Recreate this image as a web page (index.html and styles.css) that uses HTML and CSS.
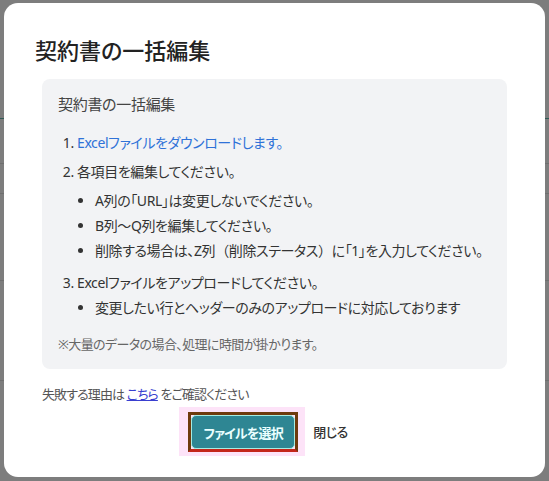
FILE: index.html
```html
<!DOCTYPE html>
<html lang="ja">
<head>
<meta charset="utf-8">
<link rel="stylesheet" href="styles.css">
</head>
<body>
<div class="backdrop">
  <div class="dialog">
    <h1 class="title">契約書の一括編集</h1>
    <div class="panel">
      <p class="panel-head">契約書の一括編集</p>
      <ol class="steps">
        <li><a class="dl-link" href="#">Excelファイルをダウンロードします。</a></li>
        <li>各項目を編集してください。
          <ul class="subs">
            <li>A列の「URL」は変更しないでください。</li>
            <li>B列～Q列を編集してください。</li>
            <li>削除する場合は、Z列<span class="wide">（</span>削除ステータス<span class="wide">）</span>に「1」を入力してください。</li>
          </ul>
        </li>
        <li>Excelファイルをアップロードしてください。
          <ul class="subs subs-last">
            <li>変更したい行とヘッダーのみのアップロードに対応しております</li>
          </ul>
        </li>
      </ol>
      <p class="note">※大量のデータの場合、処理に時間が掛かります。</p>
    </div>
    <p class="reason">失敗する理由は <a class="reason-link" href="#">こちら</a> をご確認ください</p>
    <div class="actions">
      <div class="focus-glow">
        <div class="focus-ring"><button class="primary">ファイルを選択</button></div>
      </div>
      <button class="close">閉じる</button>
    </div>
  </div>
</div>
</body>
</html>
```

FILE: styles.css
```css
* { box-sizing: border-box; }
html, body { margin: 0; padding: 0; }
body {
  width: 549px;
  height: 481px;
  overflow: hidden;
  font-family: "Noto Sans", "Noto Sans CJK JP", sans-serif;
  font-feature-settings: "palt";
  background-color: #7d7d7d;
  background-image:
    linear-gradient(#6f6f6f, #6f6f6f),
    linear-gradient(#6f6f6f, #6f6f6f),
    linear-gradient(#6f6f6f, #6f6f6f),
    linear-gradient(#6f6f6f, #6f6f6f),
    linear-gradient(#2f5a55, #2f5a55);
  background-size: 549px 1px, 549px 1px, 549px 1px, 549px 1px, 549px 1px;
  background-position: 0 163px, 0 193px, 0 280px, 0 380px, 0 118px;
  background-repeat: no-repeat;
}
.backdrop {
  padding: 3px 4px 4px 4px;
}
.dialog {
  width: 541px;
  height: 474px;
  background: #ffffff;
  border-radius: 14px;
  padding: 32px 38px 0 38px;
  color: #333;
}
.title {
  margin: 0 0 0 -7px;
  font-size: 22px;
  font-weight: 500;
  line-height: 30px;
  color: #222;
}
.panel {
  margin-top: 14px;
  background: #f2f3f5;
  border-radius: 8px;
  padding: 13px 16px 15px 16px;
}
.panel-head {
  margin: 0;
  font-size: 15px;
  line-height: 24px;
  letter-spacing: -0.3px;
  color: #444;
}
.steps {
  margin: 15px 0 0 0;
  padding: 0 0 0 19px;
  font-size: 14px;
  letter-spacing: -0.4px;
  line-height: 24px;
  color: #333;
}
.steps li { white-space: nowrap; }
.steps > li { margin-top: 5px; }
.steps > li:first-child { margin-top: 0; }
.steps > li + li + li { margin-top: 8px; }
.dl-link {
  color: #2f72d8;
  text-decoration: none;
}
.subs {
  margin: 4px 0 0 0;
  padding: 0 0 0 18px;
  list-style: disc;
  line-height: 25px;
}
.subs-last { margin-top: 0; }
.wide { font-feature-settings: normal; }
.note {
  margin: 14px 0 0 0;
  font-size: 13px;
  letter-spacing: -0.6px;
  line-height: 20px;
  color: #666;
}
.reason {
  margin: 15px 0 0 0;
  font-size: 13px;
  letter-spacing: -0.9px;
  line-height: 20px;
  color: #555;
}
.reason-link {
  color: #3a3fd0;
  text-decoration: underline;
}
.actions {
  display: flex;
  justify-content: center;
  align-items: center;
  margin-top: 3px;
  padding-right: 12px;
}
.focus-glow {
  background: #fde3f8;
  padding: 5px 7px 4px 9px;
}
.focus-ring {
  border: 3px solid #6e3a0c;
  border-bottom-color: #c4261a;
}
.primary {
  display: block;
  font-family: inherit;
  font-feature-settings: "palt";
  font-size: 13px;
  font-weight: 700;
  letter-spacing: -0.8px;
  white-space: nowrap;
  color: #eaffff;
  background: #2e8693;
  border: 1px solid #a6ece2;
  border-radius: 5px;
  padding: 0 10px;
  height: 34px;
  width: 104px;
}
.close {
  font-family: inherit;
  font-feature-settings: "palt";
  font-size: 13px;
  font-weight: 500;
  letter-spacing: -0.5px;
  color: #333;
  background: transparent;
  border: none;
  padding: 0 10px 0 8px;
  margin-left: 0;
  height: 34px;
}
```
